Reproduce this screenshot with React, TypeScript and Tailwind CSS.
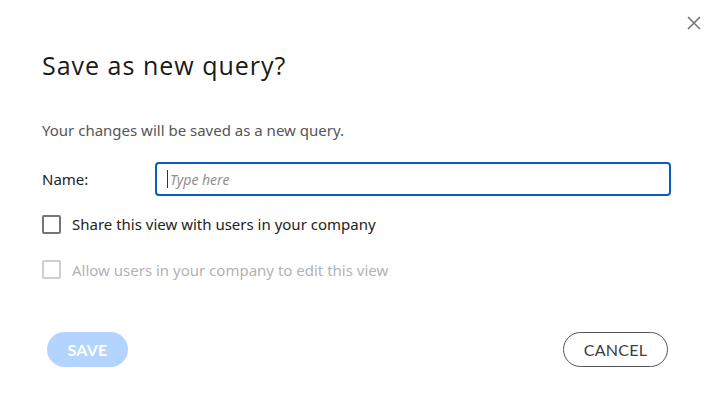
export default function App() {
  return (
    <div className="relative w-[716px] h-[408px] bg-white overflow-hidden">
      <button className="absolute top-[15px] right-[14px] w-4 h-4 flex items-center justify-center text-[#757575]">
        <svg width="14" height="14" viewBox="0 0 14 14" fill="none" stroke="currentColor" strokeWidth="1.6">
          <path d="M1 1 L13 13 M13 1 L1 13" />
        </svg>
      </button>

      <div className="pl-[42px] pr-[45px] pt-[50px] font-['Noto_Sans',sans-serif]">
        <h1 className="font-['Open_Sans',sans-serif] text-[25px] leading-[30px] tracking-[1px] text-[#1a1a1a] font-medium">
          Save as new query?
        </h1>

        <p className="mt-[40px] text-[15px] leading-[20px] text-[#555555]">
          Your changes will be saved as a new query.
        </p>

        <div className="mt-[22px] flex items-center">
          <label className="w-[113px] text-[15px] text-[#222222]">Name:</label>
          <div className="relative">
            <span className="absolute left-[12px] top-[8px] w-px h-[18px] bg-[#333]" />
            <input
              placeholder="Type here"
              className="w-[516px] h-[34px] rounded-[4px] border-2 border-[#0b5cc1] pl-[13px] pr-[12px] text-[14px] italic text-[#222] placeholder:text-[#8f8f8f] outline-none"
            />
          </div>
        </div>

        <label className="mt-[17px] flex items-center gap-[11px] text-[15px] text-[#222222]">
          <span className="w-[19px] h-[19px] rounded-[2px] border-2 border-[#757575]" />
          Share this view with users in your company
        </label>

        <label className="mt-[23px] flex items-center gap-[11px] text-[15px] text-[#b3b3b3]">
          <span className="w-[19px] h-[19px] rounded-[2px] border-2 border-[#cfcfcf]" />
          Allow users in your company to edit this view
        </label>

        <div className="mt-[51px] flex items-center justify-between pl-[5px] pr-[3px] font-['Lato',sans-serif]">
          <button className="w-[81px] h-[35px] rounded-full bg-[#b3d4ff] text-white text-[16px] font-bold tracking-[0.3px]">
            SAVE
          </button>
          <button className="w-[105px] h-[35px] rounded-full border border-[#555555] text-[#3d3d3d] text-[16px] tracking-[0.3px]">
            CANCEL
          </button>
        </div>
      </div>
    </div>
  );
}
